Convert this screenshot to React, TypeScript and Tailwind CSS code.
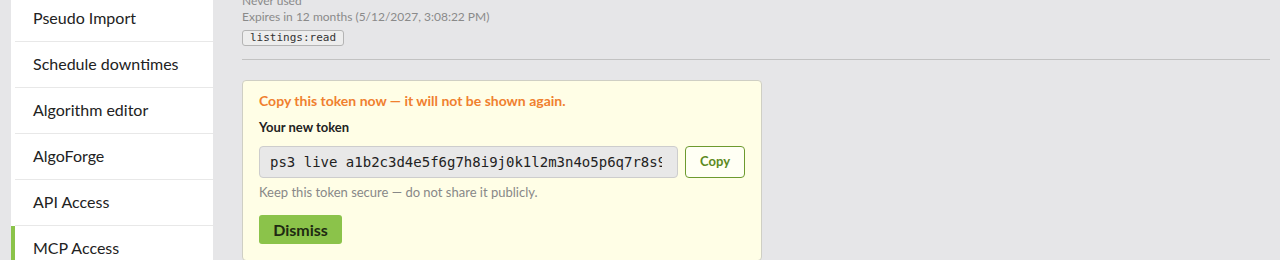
import React from 'react';

const navItems = [
  'Pseudo Import',
  'Schedule downtimes',
  'Algorithm editor',
  'AlgoForge',
  'API Access',
  'MCP Access',
];

const token =
  'ps3 live a1b2c3d4e5f6g7h8i9j0k1l2m3n4o5p6q7r8s9t0u1v2w3x4y5z6a7b8c9d0';

function Sidebar() {
  return (
    <aside className="ml-[11px] w-[202px] shrink-0 bg-white">
      <div className="-mt-[4px]">
        {navItems.map((item) => {
          const active = item === 'MCP Access';
          return (
            <div
              key={item}
              className={
                active
                  ? 'border-l-4 border-[#8bc34a]'
                  : 'border-l-4 border-white'
              }
            >
              <div className="flex h-[46px] items-center border-b border-[#e8e8e8] pb-[2px] pl-[18px] text-[16px] text-[#222]">
                {item}
              </div>
            </div>
          );
        })}
      </div>
    </aside>
  );
}

function TokenCard() {
  return (
    <div className="mt-[20px] w-[520px] rounded-[4px] border border-[#cfcfc4] bg-[#fffee6] px-4 pt-[12px] pb-4">
      <p className="text-[14px] leading-4 font-bold text-[#f0802f]">
        Copy this token now — it will not be shown again.
      </p>
      <p className="mt-[10px] text-[13px] leading-4 font-bold text-[#222]">
        Your new token
      </p>
      <div className="mt-[11px] flex gap-[7px]">
        <input
          readOnly
          value={token}
          className="h-8 w-[420px] rounded-[4px] border border-[#cdcdcd] bg-[#e8e8e8] pl-[10px] pr-[15px] text-[14px] text-[#222] outline-none"
          style={{ fontFamily: '"DejaVu Sans Mono", monospace' }}
        />
        <button className="h-8 w-[60px] rounded-[4px] border border-[#6d9a2e] bg-[#fffff4] text-[13px] font-bold text-[#5c8a22]">
          Copy
        </button>
      </div>
      <p className="mt-[6px] text-[13px] leading-4 text-[#888]">
        Keep this token secure — do not share it publicly.
      </p>
      <button className="mt-[15px] h-[29px] w-[83px] rounded-[3px] bg-[#8bc34a] text-[16px] font-bold text-[#1f2a12]">
        Dismiss
      </button>
    </div>
  );
}

export default function App() {
  return (
    <div
      className="flex h-[260px] w-[1280px] overflow-hidden bg-[#e6e6e8]"
      style={{ fontFamily: 'Lato, "Noto Sans", sans-serif' }}
    >
      <Sidebar />
      <main className="ml-[29px] mr-[10px] flex-1">
        <div className="-mt-[7px] text-[12px] leading-4 text-[#8a8a8a]">
          <p>Never used</p>
          <p>Expires in 12 months (5/12/2027, 3:08:22 PM)</p>
        </div>
        <div className="mt-[5px] flex">
          <span
            className="flex h-4 items-center rounded-[3px] border border-[#b4b4b4] bg-[#ededed] px-[7px] text-[11px] text-[#333]"
            style={{ fontFamily: '"DejaVu Sans Mono", monospace' }}
          >
            listings:read
          </span>
        </div>
        <hr className="mt-[13px] border-t border-[#c2c2c2]" />
        <TokenCard />
      </main>
    </div>
  );
}
